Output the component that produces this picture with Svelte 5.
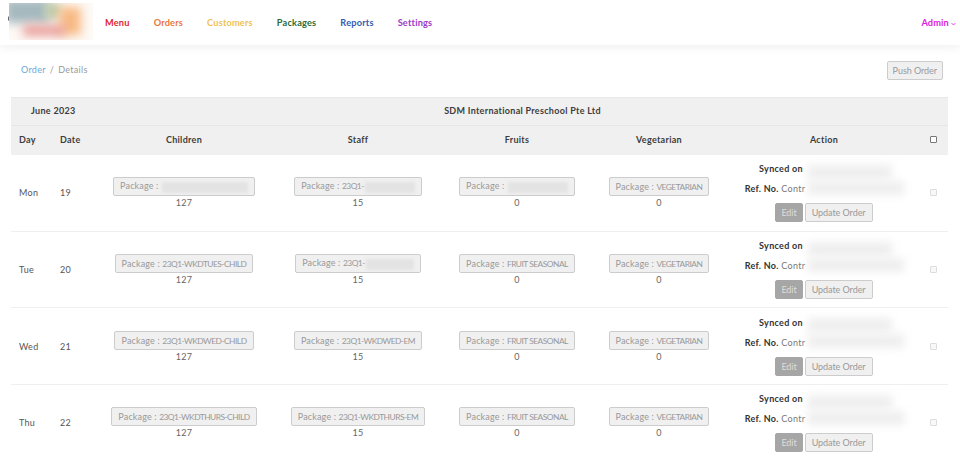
<script>
  let links = [
    { name: "Menu", color: "#e02531" },
    { name: "Orders", color: "#e9783c" },
    { name: "Customers", color: "#efc253" },
    { name: "Packages", color: "#2c6a34" },
    { name: "Reports", color: "#2f5cb5" },
    { name: "Settings", color: "#9a3bc9" }
  ];

  let rows = [
    { day: "Mon", date: 19, child: "", childBlur: 86, staff: "23Q1-", staffBlur: 50, fruit: "", fruitBlur: 60 },
    { day: "Tue", date: 20, child: "23Q1-WKDTUES-CHILD", staff: "23Q1-", staffBlur: 48, fruit: "FRUIT SEASONAL" },
    { day: "Wed", date: 21, child: "23Q1-WKDWED-CHILD", staff: "23Q1-WKDWED-EM", fruit: "FRUIT SEASONAL" },
    { day: "Thu", date: 22, child: "23Q1-WKDTHURS-CHILD", staff: "23Q1-WKDTHURS-EM", fruit: "FRUIT SEASONAL" }
  ];
</script>

{#snippet pack(value, blur, count)}
  <div class="pack">
    <button class="pack-btn">Package : <span class="val">{value}</span>{#if blur}<span class="smear" style="width: {blur}px"></span>{/if}</button>
    <div class="count">{count}</div>
  </div>
{/snippet}

<header class="topbar">
  <div class="logo">
    <span class="dot"></span>
    <div class="logo-img">
      <span class="blob b1"></span>
      <span class="blob b4"></span>
      <span class="blob b2"></span>
      <span class="blob b3"></span>
    </div>
  </div>
  <nav class="links">
    {#each links as l}
      <a href="#top" style="color: {l.color}">{l.name}</a>
    {/each}
  </nav>
  <a class="admin" href="#top">Admin
    <svg width="5" height="4" viewBox="0 0 5 4"><path d="M.5 1l2 2 2-2" fill="none" stroke="#e020e0" stroke-width=".8" /></svg>
  </a>
</header>

<main class="page">
  <div class="crumbs">
    <div class="trail"><a href="#top">Order</a><span class="sep">/</span><span>Details</span></div>
    <button class="btn push">Push Order</button>
  </div>

  <table>
    <colgroup>
      <col class="w-day" />
      <col class="w-date" />
      <col class="w-people" />
      <col class="w-people" />
      <col class="w-fruit" />
      <col class="w-veg" />
      <col class="w-action" />
      <col class="w-check" />
    </colgroup>
    <thead>
      <tr class="title">
        <th class="month" colspan="2">June 2023</th>
        <th colspan="6" class="school">SDM International Preschool Pte Ltd</th>
      </tr>
      <tr class="cols">
        <th class="day">Day</th>
        <th class="date">Date</th>
        <th>Children</th>
        <th>Staff</th>
        <th>Fruits</th>
        <th>Vegetarian</th>
        <th>Action</th>
        <th class="check"><input type="checkbox" /></th>
      </tr>
    </thead>
    <tbody>
      {#each rows as r}
        <tr>
          <td class="day">{r.day}</td>
          <td class="date">{r.date}</td>
          <td>{@render pack(r.child, r.childBlur, 127)}</td>
          <td>{@render pack(r.staff, r.staffBlur, 15)}</td>
          <td>{@render pack(r.fruit, r.fruitBlur, 0)}</td>
          <td>{@render pack("VEGETARIAN", 0, 0)}</td>
          <td class="action">
            <div class="sync"><b>Synced on</b></div>
            <div class="ref"><b>Ref. No.</b> Contr</div>
            <div class="btns">
              <button class="btn edit">Edit</button>
              <button class="btn">Update Order</button>
            </div>
            <span class="cover c1"></span>
            <span class="cover c2"></span>
          </td>
          <td class="check"><input type="checkbox" disabled /></td>
        </tr>
      {/each}
    </tbody>
  </table>
</main>

<style>
  :global(body) {
    font-family: "Lato", "Open Sans", sans-serif;
    background: #fff;
    overflow: hidden;
  }

  a {
    text-decoration: none;
  }

  .topbar {
    height: 45px;
    display: flex;
    align-items: center;
    padding-right: 4px;
    background: #fff;
    box-shadow: 0 2px 10px rgba(0, 0, 0, 0.07);
    position: relative;
  }

  .logo {
    width: 105px;
    height: 45px;
    position: relative;
    flex: none;
    overflow: hidden;
  }

  .dot {
    position: absolute;
    left: 8px;
    top: 16px;
    width: 3px;
    height: 5px;
    background: #667;
    border-radius: 2px;
  }

  .logo-img {
    position: absolute;
    left: 9px;
    top: 3px;
    width: 84px;
    height: 37px;
    overflow: hidden;
    background: #fdf9f5;
  }

  .blob {
    position: absolute;
    filter: blur(5px);
  }

  .b1 {
    left: -4px;
    top: -4px;
    width: 44px;
    height: 24px;
    background: #a5b9bf;
  }

  .b4 {
    left: 36px;
    top: 0;
    width: 16px;
    height: 16px;
    background: #bcc8a4;
  }

  .b2 {
    left: 50px;
    top: 4px;
    width: 22px;
    height: 28px;
    background: #f8bb85;
  }

  .b3 {
    left: 14px;
    top: 22px;
    width: 42px;
    height: 11px;
    background: #e9a09c;
  }

  .links {
    display: flex;
    gap: 24px;
    font-size: 9.2px;
    font-weight: 700;
    letter-spacing: 0.2px;
  }

  .admin {
    margin-left: auto;
    color: #e020e0;
    font-size: 9.2px;
    font-weight: 700;
    letter-spacing: 0.1px;
  }

  .page {
    padding: 16px 12px 0 11px;
  }

  .crumbs {
    height: 36px;
    display: flex;
    justify-content: space-between;
    padding: 0 5px 0 10px;
    font-size: 9px;
    letter-spacing: 0.3px;
    color: #999;
  }

  .trail {
    padding-top: 3px;
  }

  .trail a {
    color: #6da7da;
  }

  .sep {
    margin: 0 4px;
  }

  .btn {
    height: 19px;
    padding: 0 6px;
    border: 1px solid #ccc;
    border-radius: 2px;
    background: #f0f0f0;
    color: #999;
    font: inherit;
    font-size: 9px;
    letter-spacing: -0.05px;
  }

  .push {
    padding: 0 5px;
  }

  table {
    width: 937px;
    border-collapse: collapse;
    table-layout: fixed;
    color: #333;
    font-size: 9px;
    letter-spacing: 0.3px;
  }

  .w-day {
    width: 41px;
  }

  .w-date {
    width: 45px;
  }

  .w-people {
    width: 174px;
  }

  .w-fruit {
    width: 144px;
  }

  .w-veg {
    width: 140px;
  }

  .w-action {
    width: 190px;
  }

  .w-check {
    width: 29px;
  }

  thead tr {
    background: #f0f0f0;
  }

  th {
    font-weight: 700;
    text-align: center;
    padding: 0 0 2px;
    color: #3d3d3d;
  }

  .title {
    height: 28px;
    border-top: 1px solid #e8e8e8;
    border-bottom: 1px solid #e6e6e6;
  }

  .cols {
    height: 29px;
  }

  th.month {
    text-align: left;
    padding-left: 20px;
  }

  th.day,
  td.day,
  th.date,
  td.date {
    text-align: left;
    padding-left: 8px;
  }

  .check input {
    appearance: none;
    box-sizing: border-box;
    display: block;
    width: 7px;
    height: 7px;
    margin: 0 0 0 11px;
    background: #fff;
    border: 1px solid #777;
    border-radius: 1px;
  }

  .check input:disabled {
    background: #f8f8f8;
    border-color: #ddd;
  }

  tbody tr {
    height: 76.7px;
    border-bottom: 1px solid #efefef;
  }

  td {
    padding: 0;
    text-align: center;
    color: #555;
  }

  .pack {
    padding-top: 1px;
  }

  .pack-btn {
    height: 19px;
    padding: 0 6px;
    border: 1px solid #ccc;
    border-radius: 2px;
    background: #f0f0f0;
    color: #999;
    font: inherit;
    font-size: 9px;
    letter-spacing: 0.15px;
    white-space: nowrap;
  }

  .val {
    font-size: 8.4px;
    letter-spacing: -0.5px;
  }

  .smear {
    display: inline-block;
    height: 11px;
    margin-left: 1px;
    vertical-align: middle;
    background: #e3e3e3;
    filter: blur(1.5px);
  }

  .count {
    margin-top: 1px;
    line-height: 12px;
    color: #666;
  }

  .action {
    position: relative;
    color: #777;
  }

  .action b {
    color: #333;
  }

  .sync {
    padding-right: 86px;
    line-height: 12px;
  }

  .ref {
    margin-top: 8px;
    padding-right: 98px;
    line-height: 12px;
  }

  .btns {
    display: flex;
    justify-content: center;
    gap: 2px;
    margin-top: 8px;
  }

  .edit {
    padding: 0 5px;
    background: #a6a6a6;
    border-color: #a6a6a6;
    color: #ddd;
  }

  .cover {
    position: absolute;
    background: #eeeeee;
    filter: blur(4px);
  }

  .c1 {
    left: 79px;
    top: 10px;
    width: 84px;
    height: 14px;
  }

  .c2 {
    left: 79px;
    top: 26px;
    width: 96px;
    height: 14px;
  }
</style>
